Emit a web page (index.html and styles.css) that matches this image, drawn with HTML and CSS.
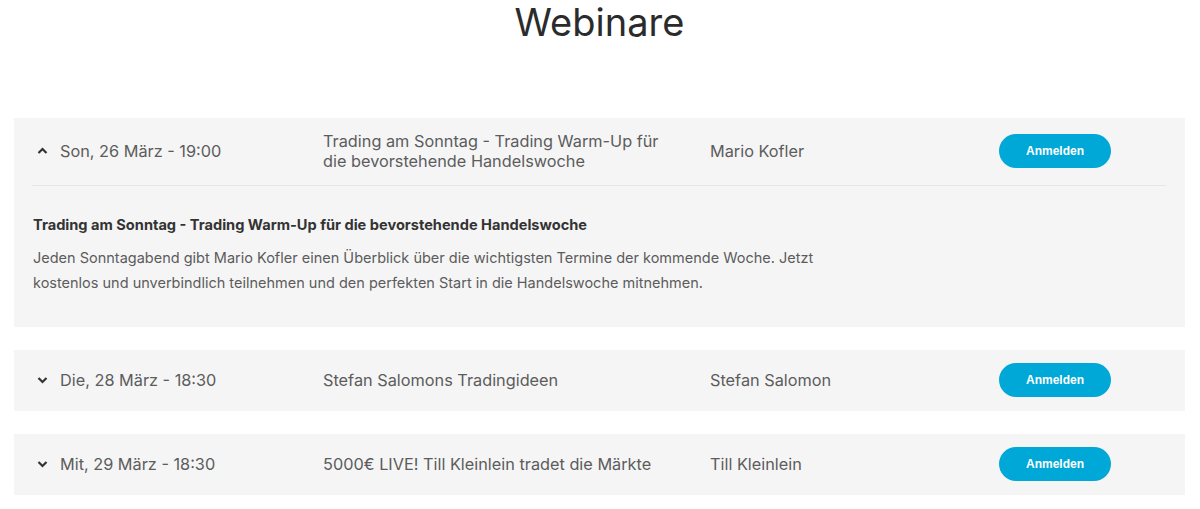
FILE: index.html
```html
<!DOCTYPE html>
<html lang="de">
<head>
<meta charset="utf-8">
<title>Webinare</title>
<link rel="stylesheet" href="styles.css">
</head>
<body>
<main class="page">
  <h1 class="page-title">Webinare</h1>
  <div class="list">
    <section class="card open">
      <div class="row">
        <span class="chev"><svg width="11" height="8" viewBox="0 0 11 8"><path d="M1.5 6 L5.5 2 L9.5 6" fill="none" stroke="#333" stroke-width="2.2"/></svg></span>
        <span class="date">Son, 26 März - 19:00</span>
        <span class="title">Trading am Sonntag - Trading Warm-Up für die bevorstehende Handelswoche</span>
        <span class="speaker">Mario Kofler</span>
        <span class="action"><button class="btn">Anmelden</button></span>
      </div>
      <div class="details">
        <h2 class="details-title">Trading am Sonntag - Trading Warm-Up für die bevorstehende Handelswoche</h2>
        <p class="details-text">Jeden Sonntagabend gibt Mario Kofler einen Überblick über die wichtigsten Termine der kommende Woche. Jetzt kostenlos und unverbindlich teilnehmen und den perfekten Start in die Handelswoche mitnehmen.</p>
      </div>
    </section>
    <section class="card">
      <div class="row">
        <span class="chev"><svg width="11" height="8" viewBox="0 0 11 8"><path d="M1.5 2 L5.5 6 L9.5 2" fill="none" stroke="#333" stroke-width="2.2"/></svg></span>
        <span class="date">Die, 28 März - 18:30</span>
        <span class="title">Stefan Salomons Tradingideen</span>
        <span class="speaker">Stefan Salomon</span>
        <span class="action"><button class="btn">Anmelden</button></span>
      </div>
    </section>
    <section class="card">
      <div class="row">
        <span class="chev"><svg width="11" height="8" viewBox="0 0 11 8"><path d="M1.5 2 L5.5 6 L9.5 2" fill="none" stroke="#333" stroke-width="2.2"/></svg></span>
        <span class="date">Mit, 29 März - 18:30</span>
        <span class="title">5000€ LIVE! Till Kleinlein tradet die Märkte</span>
        <span class="speaker">Till Kleinlein</span>
        <span class="action"><button class="btn">Anmelden</button></span>
      </div>
    </section>
  </div>
</main>
</body>
</html>
```

FILE: styles.css
```css
* { box-sizing: border-box; }
html, body { margin: 0; padding: 0; background: #fff; }
body { font-family: Inter, "Noto Sans", sans-serif; color: #555; }
.page { padding: 0 15px 0 14px; }
.page-title {
  margin: 0;
  text-align: center;
  font-family: Inter, sans-serif;
  font-weight: 400;
  font-size: 38px;
  line-height: 44px;
  color: #2b2b2b;
}
.list { margin-top: 74px; display: flex; flex-direction: column; gap: 23px; }
.card { background: #f5f5f5; padding: 0 19px 0 18px; }
.row {
  display: grid;
  grid-template-columns: 28px 263px 387px 289px 112px;
  align-items: center;
  padding: 13px 0 14px;
  font-family: Inter, "Liberation Sans", sans-serif;
  font-size: 16.3px;
  line-height: 20px;
  color: #5c5c5c;
}
.title { padding-right: 36px; }
.open .row { border-bottom: 1px solid #e6e6e6; }
.chev { display: flex; padding-left: 5px; align-items: center; }
.chev svg { display: block; }
.btn {
  display: block;
  width: 112px;
  height: 34px;
  border: 0;
  border-radius: 17px;
  background: #00a8d7;
  color: #fff;
  font-family: "Liberation Sans", Arial, sans-serif;
  font-weight: 700;
  font-size: 12px;
  cursor: pointer;
}
.details { padding: 29px 1px 32px; }
.details-title {
  margin: 0;
  font-size: 14.6px;
  line-height: 20px;
  font-weight: 700;
  color: #333;
}
.details-text {
  margin: 10px 0 0;
  max-width: 800px;
  font-size: 14.5px;
  line-height: 25px;
  color: #5c5c5c;
}
```
